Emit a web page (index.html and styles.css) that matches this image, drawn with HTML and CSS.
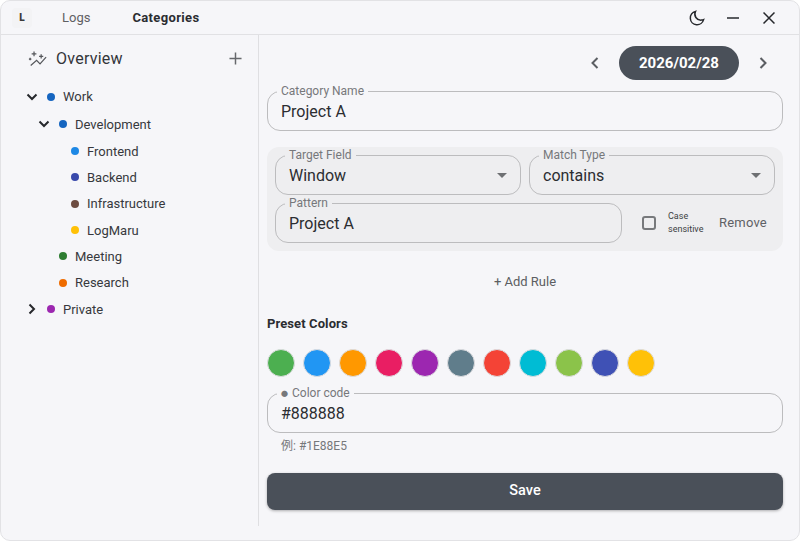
FILE: index.html
```html
<!DOCTYPE html>
<html lang="en">
<head>
<meta charset="utf-8">
<title>LogMaru</title>
<link rel="stylesheet" href="styles.css">
</head>
<body>
<div class="window">
  <header class="titlebar">
    <div class="logo">L</div>
    <nav class="tabs">
      <span class="tab">Logs</span>
      <span class="tab active">Categories</span>
    </nav>
    <div class="win-actions">
      <svg class="win-icon" viewBox="0 0 24 24"><path d="M10 3.2a9 9 0 1 0 10.8 11 7.6 7.6 0 0 1-3 .6A8 8 0 0 1 10 3.2z"/></svg>
      <svg class="win-icon" viewBox="0 0 24 24"><path d="M4 12h16"/></svg>
      <svg class="win-icon" viewBox="0 0 24 24"><path d="M4.7 4.7l14.6 14.6M19.3 4.7L4.7 19.3"/></svg>
    </div>
  </header>
  <div class="body">
    <aside class="sidebar">
      <div class="overview">
        <svg class="spark" viewBox="0 0 20 20"><path d="M1.8 17.4L8 12l3.6 3.6L18 8.6"/><path d="M5.3 2.6v5M2.8 5.1h5M12.8 5.6v4.4M10.6 7.8H15M1.2 9.3v2.6M-.1 10.6h2.6"/></svg>
        <span class="overview-text">Overview</span>
        <svg class="plus" viewBox="0 0 14 14"><path d="M7 .5v13M.5 7h13"/></svg>
      </div>
      <ul class="tree">
        <li class="row first"><svg class="chev" viewBox="0 0 12 12"><path d="M1.5 3.5L6 8l4.5-4.5"/></svg><i class="dot c-work"></i><span>Work</span></li>
        <li class="row lvl1 first"><svg class="chev" viewBox="0 0 12 12"><path d="M1.5 3.5L6 8l4.5-4.5"/></svg><i class="dot c-dev"></i><span>Development</span></li>
        <li class="row lvl2"><i class="dot c-front"></i><span>Frontend</span></li>
        <li class="row lvl2"><i class="dot c-back"></i><span>Backend</span></li>
        <li class="row lvl2"><i class="dot c-infra"></i><span>Infrastructure</span></li>
        <li class="row lvl2"><i class="dot c-logm"></i><span>LogMaru</span></li>
        <li class="row lvl1b"><i class="dot c-meet"></i><span>Meeting</span></li>
        <li class="row lvl1b"><i class="dot c-res"></i><span>Research</span></li>
        <li class="row closed"><svg class="chev" viewBox="0 0 12 12"><path d="M3.5 1.5L8 6l-4.5 4.5"/></svg><i class="dot c-priv"></i><span>Private</span></li>
      </ul>
    </aside>
    <main class="main">
      <div class="date-row">
        <svg class="arrow" viewBox="0 0 10 14"><path d="M7.5 2L2.5 7l5 5"/></svg>
        <div class="date-pill">2026/02/28</div>
        <svg class="arrow" viewBox="0 0 10 14"><path d="M2.5 2l5 5-5 5"/></svg>
      </div>
      <div class="field">
        <label class="field-label">Category Name</label>
        <div class="field-value">Project A</div>
      </div>
      <section class="rule">
        <div class="rule-row">
          <div class="field on-group grow-a">
            <label class="field-label">Target Field</label>
            <div class="field-value">Window</div>
            <i class="caret"></i>
          </div>
          <div class="field on-group grow-b">
            <label class="field-label">Match Type</label>
            <div class="field-value">contains</div>
            <i class="caret"></i>
          </div>
        </div>
        <div class="rule-row">
          <div class="field on-group pattern">
            <label class="field-label">Pattern</label>
            <div class="field-value">Project A</div>
          </div>
          <i class="checkbox"></i>
          <span class="case">Case<br>sensitive</span>
          <span class="remove">Remove</span>
        </div>
      </section>
      <div class="add-rule">+ Add Rule</div>
      <h3 class="preset-title">Preset Colors</h3>
      <div class="swatches">
        <i class="swatch s1"></i><i class="swatch s2"></i><i class="swatch s3"></i><i class="swatch s4"></i><i class="swatch s5"></i><i class="swatch s6"></i><i class="swatch s7"></i><i class="swatch s8"></i><i class="swatch s9"></i><i class="swatch s10"></i><i class="swatch s11"></i>
      </div>
      <div class="field">
        <label class="field-label"><span class="bullet">●</span> Color code</label>
        <div class="field-value">#888888</div>
      </div>
      <div class="hint">例: #1E88E5</div>
      <button class="save">Save</button>
    </main>
  </div>
</div>
</body>
</html>
```
FILE: styles.css
```css
* { box-sizing: border-box; }
html, body { margin: 0; padding: 0; height: 100%; background: #fff; }
body { font-family: Roboto, "Noto Sans CJK JP", sans-serif; color: #2b2d31; }
.window {
  width: 800px; height: 541px; background: #f6f6f9;
  border: 1px solid #e2e2e5; border-radius: 10px; overflow: hidden;
  display: flex; flex-direction: column;
}
.titlebar {
  height: 34px; flex: none; display: flex; align-items: center;
  border-bottom: 1px solid #e1e1e4;
}
.logo {
  width: 20px; height: 20px; margin-left: 11px; font-size: 10px; font-weight: 900;
  display: flex; align-items: center; justify-content: center; color: #3a3a3a; background: #f3f3f5; border-radius: 4px;
}
.tabs { display: flex; margin-left: 30px; gap: 42px; font-size: 13px; }
.tab { color: #5f6063; }
.tab.active { color: #2b2d31; font-weight: 700; letter-spacing: .35px; }
.win-actions { margin-left: auto; display: flex; gap: 18px; padding-right: 21px; }
.win-icon { width: 18px; height: 18px; fill: none; stroke: #26282c; stroke-width: 2; }
.body { flex: 1; display: flex; min-height: 0; padding-bottom: 14px; }
.sidebar { width: 258px; flex: none; border-right: 1px solid #dfdfe2; padding-left: 28px; }
.overview { display: flex; align-items: center; height: 22px; margin-top: 12px; }
.spark { width: 19px; height: 19px; fill: none; stroke: #55575b; stroke-width: 1.3; overflow: visible; }
.overview-text { font-size: 16px; margin-left: 8px; color: #333539; letter-spacing: .25px; }
.plus { width: 13px; height: 13px; margin-left: auto; margin-right: 16px; fill: none; stroke: #66686c; stroke-width: 1.6; }
.tree { list-style: none; margin: 14px 0 0 -4px; padding: 0; font-size: 13px; }
.row { display: flex; align-items: center; height: 26.3px; color: #37393d; }
.row.first { height: 27.5px; }
.row.closed { margin-top: .5px; }
.chev { width: 12px; height: 12px; flex: none; fill: none; stroke: #26282c; stroke-width: 2; margin-left: 1px; }
.row .dot { width: 8px; height: 8px; border-radius: 50%; flex: none; margin-left: 9px; margin-right: 8px; }
.row.lvl1 { padding-left: 12px; }
.row.lvl1b { padding-left: 25px; }
.row.lvl2 { padding-left: 37px; }
.c-work, .c-dev { background: #1565c0; }
.c-front { background: #1e88e5; }
.c-back { background: #3949ab; }
.c-infra { background: #6d4c41; }
.c-logm { background: #ffc107; }
.c-meet { background: #2e7d32; }
.c-res { background: #ef6c00; }
.c-priv { background: #9c27b0; }
.main { flex: 1; padding: 11px 16px 0 8px; min-width: 0; display: flex; flex-direction: column; }
.date-row { display: flex; align-items: center; justify-content: flex-end; height: 34px; margin-bottom: 11px; padding-right: 15px; }
.arrow { width: 10px; height: 14px; fill: none; stroke: #5b5e63; stroke-width: 2; }
.date-pill {
  width: 120px; height: 34px; margin: 0 19px; border-radius: 17px; background: #4a5059; color: #fff;
  font-size: 15px; font-weight: 700; display: flex; align-items: center; justify-content: center;
}
.field {
  position: relative; height: 40px; border: 1px solid #bcbcbe; border-radius: 13px;
  display: flex; align-items: center; padding: 0 13px; flex: none;
}
.field-label {
  position: absolute; left: 9px; top: -8px; padding: 0 4px; font-size: 12px; line-height: 14px;
  color: #76787b; background: #f6f6f9;
}
.bullet { font-size: 7px; vertical-align: 1px; margin-right: 1px; }
.field-value { font-size: 16px; color: #2b2d31; }
.on-group .field-label { background: #eeeef0; }
.rule { margin-top: 16px; background: #eeeef0; border-radius: 12px; padding: 8px; display: flex; flex-direction: column; gap: 8px; flex: none; }
.rule-row { display: flex; align-items: center; }
.grow-a { width: 246px; margin-right: 8px; }
.grow-b { flex: 1; }
.caret { position: absolute; right: 13px; top: 17px; width: 0; height: 0; border: 5.5px solid transparent; border-top: 5px solid #6e7073; border-bottom: 0; }
.pattern { width: 347px; }
.checkbox { width: 14px; height: 14px; margin-left: 20px; border: 2px solid #77797c; border-radius: 3px; flex: none; }
.case { font-size: 9px; line-height: 13px; margin-left: 12px; color: #3c3e42; width: 51px; }
.remove { font-size: 13px; color: #5f6165; letter-spacing: .2px; padding-bottom: 2px; }
.add-rule { text-align: center; font-size: 13px; color: #5c5e62; margin-top: 23px; line-height: 16px; }
.preset-title { margin: 26px 0 0; font-size: 13px; font-weight: 700; line-height: 16px; color: #2b2d31; letter-spacing: .1px; }
.swatches { display: flex; gap: 8px; margin-top: 17px; flex: none; }
.swatch { width: 28px; height: 28px; border-radius: 50%; border: 1px solid #dcdcdf; }
.s1 { background: #4caf50; } .s2 { background: #2196f3; } .s3 { background: #ff9800; } .s4 { background: #e91e63; }
.s5 { background: #9c27b0; } .s6 { background: #607d8b; } .s7 { background: #f44336; } .s8 { background: #00bcd4; }
.s9 { background: #8bc34a; } .s10 { background: #3f51b5; } .s11 { background: #ffc107; }
.swatches + .field { margin-top: 16px; }
.hint { font-size: 12px; color: #76787b; padding-left: 14px; margin-top: 6px; line-height: 14px; }
.save {
  margin-top: 20px; height: 37px; flex: none; width: 100%; border: 0; border-radius: 8px; background: #4a5059; color: #fff;
  padding: 0 0 2px; font: 500 14.5px Roboto, sans-serif; box-shadow: 0 1px 3px rgba(0,0,0,.3);
}
```
